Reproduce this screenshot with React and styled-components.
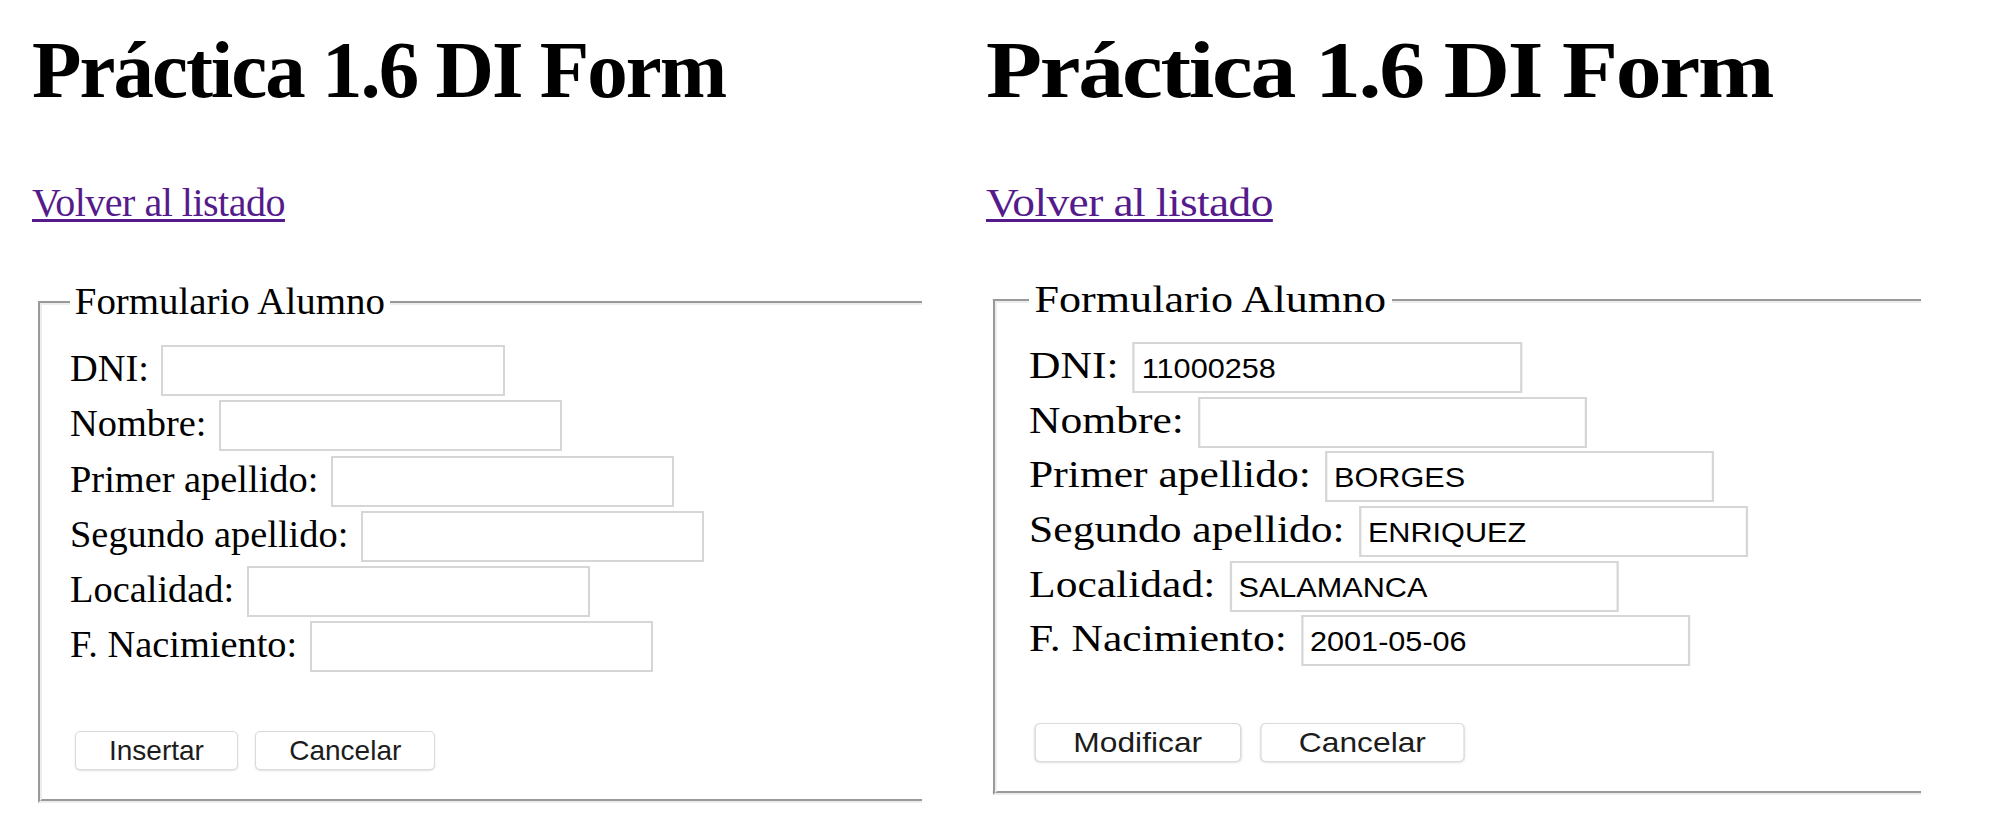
import React from 'react';
import styled, { createGlobalStyle } from 'styled-components';

const GlobalStyle = createGlobalStyle`
  html, body {
    margin: 0;
    padding: 0;
    background: #fff;
  }

  body {
    font-family: "Liberation Serif", "Times New Roman", serif;
    color: #000;
  }
`;

// Two captures of the same page side by side: the blank "insert" form
// and the filled "edit" form (the second one is stretched a bit wider).
const FIELDS = [
  { name: 'dni', label: 'DNI:' },
  { name: 'nombre', label: 'Nombre:' },
  { name: 'apellido1', label: 'Primer apellido:' },
  { name: 'apellido2', label: 'Segundo apellido:' },
  { name: 'localidad', label: 'Localidad:' },
  { name: 'nacimiento', label: 'F. Nacimiento:' }
];

const SHOTS = [
  {
    id: 'insert',
    left: 32,
    width: 890,
    sx: 1,
    fieldsetTop: 54,
    padTop: 18,
    rowGap: 4.25,
    actionsTop: 58.75,
    action: 'Insertar',
    values: {}
  },
  {
    id: 'edit',
    left: 64.3,
    width: 934.7,
    sx: 1.134,
    fieldsetTop: 52,
    padTop: 16.7,
    rowGap: 3.7,
    actionsTop: 56.8,
    action: 'Modificar',
    values: {
      dni: '11000258',
      nombre: '',
      apellido1: 'BORGES',
      apellido2: 'ENRIQUEZ',
      localidad: 'SALAMANCA',
      nacimiento: '2001-05-06'
    }
  }
];

const App = () => (
  <>
    <GlobalStyle />
    <Page>
      {SHOTS.map(shot => (
        <Shot key={shot.id} $left={shot.left} $width={shot.width}>
          <Sheet $width={shot.width} $sx={shot.sx}>
            <Title>Práctica 1.6 DI Form</Title>
            <Nav>
              <BackLink href="#">Volver al listado</BackLink>
            </Nav>
            <Fieldset $top={shot.fieldsetTop} $padTop={shot.padTop}>
              <Legend>Formulario Alumno</Legend>
              <Rows $gap={shot.rowGap}>
                {FIELDS.map(field => (
                  <Row key={field.name}>
                    <LabelText>{field.label}</LabelText>
                    <Input
                      type="text"
                      name={field.name}
                      defaultValue={shot.values[field.name] || ''}
                    />
                  </Row>
                ))}
              </Rows>
              <Actions $top={shot.actionsTop}>
                <Button type="button">{shot.action}</Button>
                <Button type="button">Cancelar</Button>
              </Actions>
            </Fieldset>
          </Sheet>
        </Shot>
      ))}
    </Page>
  </>
);

const Page = styled.main`
  display: flex;
  width: 2000px;
  height: 814px;
  overflow: hidden;
  background: #fff;
`;

const Shot = styled.section`
  flex: none;
  width: ${p => p.$width}px;
  margin-left: ${p => p.$left}px;
  overflow: hidden;
`;

const Sheet = styled.div`
  width: ${p => p.$width / p.$sx}px;
  transform: scaleX(${p => p.$sx});
  transform-origin: 0 0;
`;

const Title = styled.h1`
  margin: 25px 0 0;
  font-size: 81px;
  line-height: 90px;
  font-weight: 700;
  letter-spacing: -2px;
  white-space: nowrap;
`;

const Nav = styled.nav`
  margin-top: 66.2px;
  font-size: 40px;
  line-height: 44px;
  letter-spacing: -0.5px;
  white-space: nowrap;
`;

const BackLink = styled.a`
  color: #551a8b;
  text-decoration: underline;
  text-decoration-thickness: 2.5px;
  text-underline-offset: 3px;
`;

const Fieldset = styled.fieldset`
  box-sizing: border-box;
  width: 1100px;
  min-inline-size: 0;
  margin: ${p => p.$top}px 0 0 6px;
  padding: ${p => p.$padTop}px 0 29px 28px;
  border: 4px groove #ededed;
`;

const Legend = styled.legend`
  padding: 0 4.8px 4px;
  font-size: 38.9px;
  line-height: 44px;
  white-space: nowrap;
`;

const Rows = styled.div`
  display: flex;
  flex-direction: column;
  gap: ${p => p.$gap}px;
`;

const Row = styled.label`
  display: flex;
  align-items: center;
  height: 51px;
`;

const LabelText = styled.span`
  padding-bottom: 5px;
  font-size: 38.4px;
  line-height: 44px;
  white-space: nowrap;
`;

const Input = styled.input`
  box-sizing: border-box;
  flex: none;
  width: 343.5px;
  height: 51px;
  margin: 0 0 0 12.5px;
  padding: 4px 6px 0;
  border: 2px solid #d6d6d6;
  border-radius: 0;
  background: #fff;
  font-family: "Liberation Sans", Arial, sans-serif;
  font-size: 27px;
  color: #000;
  outline: none;
`;

const Actions = styled.div`
  display: flex;
  gap: 17.3px;
  margin: ${p => p.$top}px 0 0 5px;
`;

const Button = styled.button`
  box-sizing: border-box;
  height: 39.3px;
  padding: 0 33px;
  border: 1px solid #dadada;
  border-radius: 5px;
  background: #fff;
  box-shadow: 0 1px 2px rgba(0, 0, 0, 0.12);
  font-family: "Liberation Sans", Arial, sans-serif;
  font-size: 28px;
  line-height: 1;
  color: #1c1c1c;
`;

export default App;
